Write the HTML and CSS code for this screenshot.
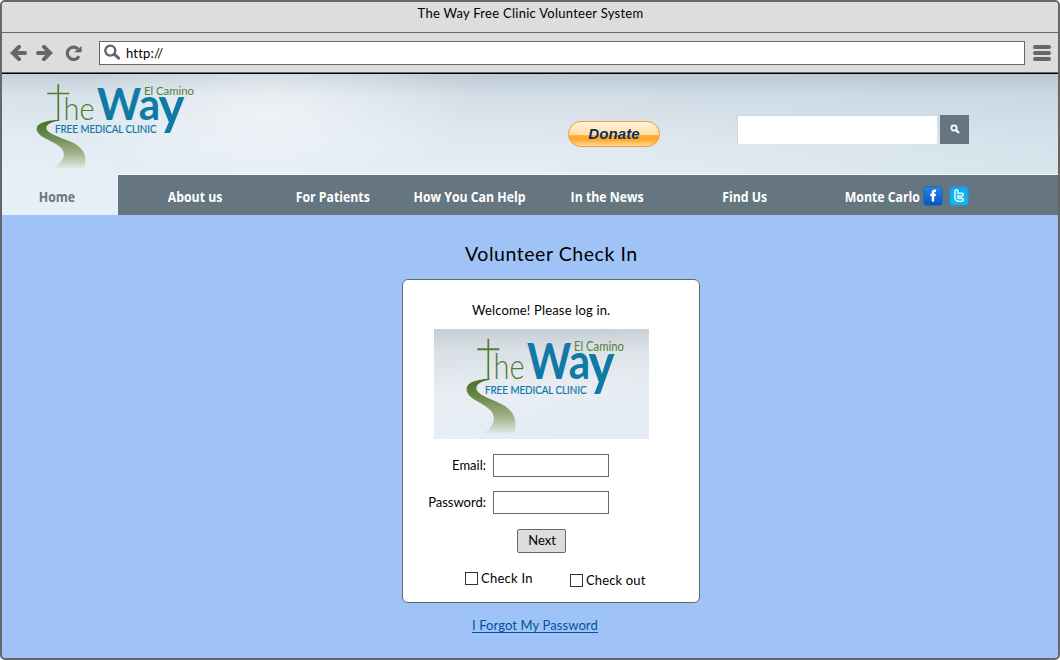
FILE: index.html
```html
<!DOCTYPE html>
<html lang="en">
<head>
<meta charset="utf-8">
<title>The Way Free Clinic Volunteer System</title>
<link rel="stylesheet" href="styles.css">
</head>
<body>
<svg class="defs" width="0" height="0">
  <defs>
    <linearGradient id="road" x1="0" y1="0" x2="0" y2="1">
      <stop offset="0" stop-color="#466f25"/><stop offset=".35" stop-color="#6d8b4c"/><stop offset=".7" stop-color="#a4b58d"/><stop offset="1" stop-color="#e3ebe9"/>
    </linearGradient>
    <g id="logo">
      <path transform="translate(-10 -5) scale(.3333)" fill="url(#road)" d="M118 134C84 136 50 142 50 162C52 190 102 195 124 220C142 242 126 264 100 279L192 281C202 246 195 225 165 206C130 188 80 178 79 159C80 145 100 139 118 137Z"/>
      <path d="M28.3 4.3V40.5M17.3 13.5H39.3" fill="none" stroke="#4f7d2c" stroke-width="1.7"/>
      <text class="logo-he" x="33.5" y="40" textLength="31" lengthAdjust="spacingAndGlyphs">he</text>
      <text class="logo-way" x="67" y="40" textLength="63" lengthAdjust="spacingAndGlyphs">Wa</text>
      <text class="logo-y" x="128.5" y="44" textLength="26" lengthAdjust="spacingAndGlyphs">y</text>
      <text class="logo-camino" x="114" y="15.3" textLength="50" lengthAdjust="spacingAndGlyphs">El Camino</text>
      <text class="logo-clinic" x="25" y="52.7" textLength="101.5" lengthAdjust="spacingAndGlyphs">FREE MEDICAL CLINIC</text>
    </g>
    <linearGradient id="fb" x1="0" y1="0" x2="0" y2="1"><stop offset="0" stop-color="#2a86e2"/><stop offset="1" stop-color="#0556bd"/></linearGradient>
    <linearGradient id="tw" x1="0" y1="0" x2="0" y2="1"><stop offset="0" stop-color="#10a8f2"/><stop offset="1" stop-color="#12b9ef"/></linearGradient>
  </defs>
</svg>
<div class="window">
  <div class="titlebar"><span class="t-title">The Way Free Clinic Volunteer System</span></div>
  <div class="toolbar">
    <svg class="nav-icon" width="17" height="16" viewBox="0 0 17 16"><path d="M9 1.8L2.8 8L9 14.2M3 8H15" fill="none" stroke="#666" stroke-width="4" stroke-linecap="round"/></svg>
    <svg class="nav-icon forward" width="17" height="16" viewBox="0 0 17 16"><path d="M8 1.8L14.2 8L8 14.2M14 8H2" fill="none" stroke="#666" stroke-width="4" stroke-linecap="round"/></svg>
    <svg class="nav-icon reload" width="17" height="16" viewBox="0 0 17 16"><path d="M13 4A6.2 6.2 0 1 0 14 11.2" fill="none" stroke="#666" stroke-width="3.2"/><path d="M16.6 1V7.2H9.2Z" fill="#666"/></svg>
    <div class="address">
      <svg width="18" height="17" viewBox="0 0 18 17"><circle cx="6.3" cy="6.6" r="5" fill="none" stroke="#666" stroke-width="2.4"/><path d="M10.2 10.2L14.6 14.2" stroke="#666" stroke-width="3" stroke-linecap="round"/></svg>
      <span class="t-url">http://</span>
    </div>
    <div class="burger"><i></i><i></i><i></i></div>
  </div>
  <header class="banner">
    <div class="masthead">
      <svg class="logo" width="170" height="95" viewBox="0 0 170 95"><use href="#logo"/></svg>
      <div class="donate"><span>Donate</span></div>
      <div class="search-box"></div>
      <div class="search-button"><svg width="11" height="11" viewBox="0 0 11 11"><circle cx="4" cy="4" r="2.6" fill="none" stroke="#fff" stroke-width="1.7"/><path d="M5.9 5.9L9 9" stroke="#fff" stroke-width="2.2"/></svg></div>
    </div>
    <nav class="menu">
      <div class="home"><span>Home</span></div>
      <div class="items">
        <div><span>About us</span></div>
        <div><span>For Patients</span></div>
        <div><span>How You Can Help</span></div>
        <div><span>In the News</span></div>
        <div><span>Find Us</span></div>
        <div><span>Monte Carlo</span></div>
      </div>
      <div class="social">
        <svg width="20" height="20" viewBox="0 0 20 20"><rect x=".8" y=".8" width="18.4" height="18.4" rx="2.5" fill="url(#fb)" stroke="#1d68bd"/><path d="M13 4.8H11.8Q10 4.8 10 6.8V15.5M7.2 9H12.8" fill="none" stroke="#fff" stroke-width="2.4"/></svg>
        <svg width="20" height="20" viewBox="0 0 20 20"><rect x=".8" y=".8" width="18.4" height="18.4" rx="2.5" fill="url(#tw)" stroke="#2393c5"/><path d="M7.4 5.2V11.2Q7.4 13.8 10 13.8H12.8M7.4 8.6H12.8" fill="none" stroke="#fff" stroke-width="4.4" stroke-linecap="round" stroke-linejoin="round"/><path d="M7.4 5.2V11.2Q7.4 13.8 10 13.8H12.8M7.4 8.6H12.8" fill="none" stroke="#2cc6f2" stroke-width="1.8" stroke-linecap="round"/></svg>
      </div>
    </nav>
  </header>
  <main class="content">
    <h1>Volunteer Check In</h1>
    <section class="card">
      <p class="welcome">Welcome! Please log in.</p>
      <div class="picture"><svg width="170" height="104" viewBox="0 0 170 92" preserveAspectRatio="none"><use href="#logo"/></svg></div>
      <div class="field"><label class="t-email">Email:</label><div class="input"></div></div>
      <div class="field"><label class="t-password">Password:</label><div class="input"></div></div>
      <div class="button"><span>Next</span></div>
      <div class="checks">
        <div class="check"><i></i><span class="t-in">Check In</span></div>
        <div class="check out"><i></i><span class="t-out">Check out</span></div>
      </div>
    </section>
    <div class="forgot">I Forgot My Password</div>
  </main>
</div>
</body>
</html>
```
FILE: styles.css
```css
* { box-sizing: border-box; }
body { margin: 0; background: #fff; font-family: Lato, sans-serif; font-size: 13px; color: #000; white-space: nowrap; }
.defs { position: absolute; }
.window { width: 1060px; height: 660px; border: 2px solid #666; border-radius: 5px; background: #9fc3f7; overflow: hidden; display: flex; flex-direction: column; }
.titlebar { height: 31px; background: #ddd; border-bottom: 1px solid #666; text-align: center; line-height: 16px; padding: 3px 0 0 1px; }
.t-title { letter-spacing: .27px; }
.toolbar { height: 40px; flex: none; background: #ddd; border-bottom: 1px solid #666; display: flex; align-items: center; padding-left: 8px; }
.forward { margin-left: 9px; }
.reload { margin-left: 12px; }
.address { margin-left: 17px; width: 926px; height: 24px; border: 1px solid #666; background: #fff; display: flex; align-items: center; padding-left: 4px; }
.t-url { margin-left: 4px; letter-spacing: .2px; }
.burger { margin-left: 8px; width: 18px; display: grid; gap: 2px; }
.burger i { height: 4px; border-radius: 2px; background: #666; }
.banner { height: 142px; flex: none; margin: 0 -2px; border: 1px solid #000; border-bottom: 0; display: flex; flex-direction: column; background: radial-gradient(ellipse 200px 75px at 270px 36px, rgba(255,255,255,.55), rgba(255,255,255,0)), linear-gradient(90deg, rgba(255,255,255,.12), rgba(255,255,255,0) 50%, rgba(150,175,190,.13)), linear-gradient(#bdcad4, #d3dee7 22px, #e0eaf2 70px, #e3eef5 110px); }
.masthead { height: 101px; flex: none; display: flex; align-items: flex-start; }
.logo { margin: 6px 0 0 29px; }
.donate { margin: 47px 0 0 368px; width: 92px; height: 26px; border: 1px solid #f7993a; border-radius: 13px; background: linear-gradient(#fff3da, #ffdfa3 53%, #ffab2d 57%, #ffab2d 75%, #ffda98); display: flex; align-items: center; justify-content: center; font: italic bold 15px "Liberation Sans", sans-serif; color: #0a3063; }
.donate span { letter-spacing: .1px; margin-top: -2px; }
.search-box { margin: 41px 0 0 77px; width: 200px; height: 29px; background: #fff; border: solid #cbd6df; border-width: 1px 0 0 1px; }
.search-button { margin: 41px 0 0 3px; width: 29px; height: 29px; padding-left: 1px; background: #657681; display: flex; align-items: center; justify-content: center; }
.menu { height: 40px; display: flex; font: 600 13.5px/44px "Open Sans", sans-serif; color: #fff; }
.home { width: 117px; padding-right: 6px; text-align: center; color: #657681; }
.menu span { display: inline-block; font-weight: 700; transform: scaleX(.91); }
.items { width: 941px; background: #657681; box-shadow: 0 -1px #fff; padding-left: 8px; display: grid; grid-template-columns: repeat(6, 137.5px); text-align: center; flex: none; }
.items > div { display: flex; justify-content: center; }
.social { margin-left: -136px; padding-top: 11px; display: flex; gap: 6px; position: relative; }
.content { display: flex; flex-direction: column; }
h1 { margin: 27px 0 0 463px; font-size: 19.5px; line-height: 24px; font-weight: 400; letter-spacing: .55px; }
.card { margin: 13px 0 0 400px; width: 298px; height: 324px; background: #fff; border: 1px solid #666; border-radius: 6px; padding-top: 21px; }
.welcome { margin: 0 0 0 69px; line-height: 18px; letter-spacing: .17px; }
.picture { margin: 10px 0 0 31px; width: 215px; height: 110px; padding: 5px 0 0 26px; background: linear-gradient(170deg, rgba(255,255,255,0) 20%, rgba(255,255,255,.2) 50%, rgba(255,255,255,0)), linear-gradient(#c7ced4, #d8dfe5 20%, #e2e9f0 55%, #e3ecf5); }
.picture svg { display: block; }
.field { display: flex; align-items: center; margin: 15px 0 0; }
.field + .field { margin-top: 14px; }
.field label { width: 83px; text-align: right; margin-right: 7px; padding-bottom: 2px; }
.input { width: 116px; height: 23px; border: 1px solid #666; }
.button { margin: 15px 0 0 114px; width: 49px; height: 24px; border: 1px solid #666; border-radius: 2px; background: #ddd; display: flex; align-items: center; justify-content: center; padding: 0 0 2px 1px; }
.checks { display: flex; margin: 16px 0 0 62px; }
.check { display: flex; align-items: center; height: 18px; width: 105px; letter-spacing: .25px; }
.check.out { margin-top: 2px; letter-spacing: .15px; }
.check i { width: 13px; height: 13px; border: 1px solid #333; margin-right: 3px; }
.forgot { margin: 14px 0 0 470px; width: 126px; height: 16px; line-height: 16px; border-bottom: 1px solid #00539b; color: #00539b; letter-spacing: .1px; }
.logo-he { font: 300 32px Lato, sans-serif; fill: #4f7d2c; }
.logo-way { font: 700 44px Lato, sans-serif; fill: #0f7aa5; }
.logo-y { font: 700 51px Lato, sans-serif; fill: #0f7aa5; }
.logo-camino { font: 400 12px Lato, sans-serif; fill: #4f8137; }
.logo-clinic { font: 400 10.5px Lato, sans-serif; fill: #0f7aa5; stroke: #0f7aa5; stroke-width: .2px; }
```
